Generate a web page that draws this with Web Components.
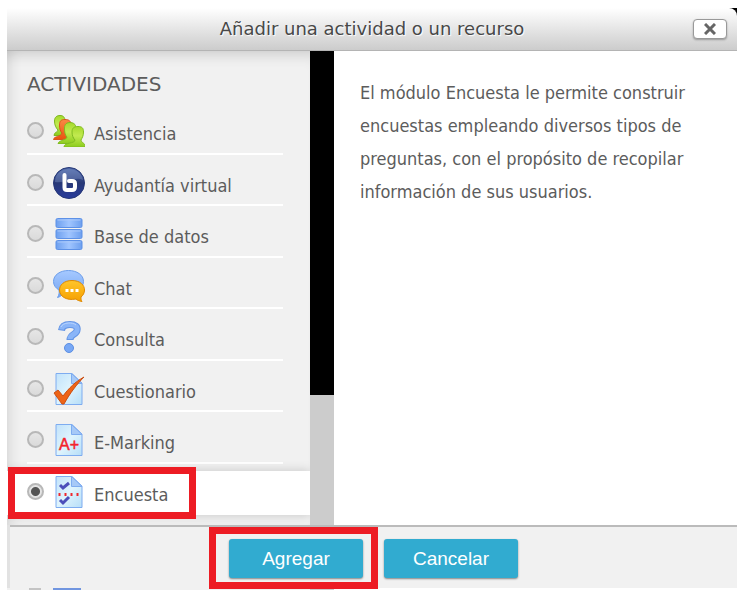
<!DOCTYPE html>
<html lang="es">
<head>
<meta charset="utf-8">
<title>Añadir una actividad o un recurso</title>
<style>
body { margin: 0; background: #fff; color: #5c5c5c; font: 18px/24px "DejaVu Sans Condensed", "DejaVu Sans", sans-serif; }
</style>
</head>
<body>
<activity-chooser></activity-chooser>
<script>
const icons = {
  asistencia: `
    <defs><linearGradient id="g" x2="0" y2="1"><stop stop-color="#a5d92c"/><stop offset=".45" stop-color="#c2ea50"/><stop offset="1" stop-color="#8ccc1d"/></linearGradient>
    <linearGradient id="o" x2="0" y2="1"><stop stop-color="#f98a45"/><stop offset="1" stop-color="#ea5410"/></linearGradient></defs>
    <path fill="url(#g)" stroke="#7cb620" d="M1 20.500C1 17 5 17.500 5 15C3 13 1.500 10 1.500 6C1.500 2 4 .5 7 .5S12 2 12 6C12 10 11 13 9.500 15C10 17 13 17 13 20.500Z"/>
    <path fill="url(#o)" stroke="#d9531e" d="M.5 24.500C1 21 8 22 9 18C7 16 6.500 13 6.500 10C6.500 6 8 4.500 12 4.500S18 6 18 10C18 14 16 16 15 18C16 20 18 21 18 24.500Z"/>
    <path fill="url(#g)" stroke="#80bb22" d="M5 28.500C6 25 14 25 14 22C12 20 11.500 17 11.500 13C11.500 9 14 7.500 17 7.500S23 9 23 13C23 18 22 20 20 22C21 24 23 25 23 28.500Z"/>
    <path fill="url(#g)" stroke="#80bb22" d="M11 32C11 27 22 29 22 25C20 23 19 20 19 17C19 13 21 11.500 25 11.500S30.500 13 30.500 17C30.500 21 29 23 28 25C28 28 32 27 32 32Z"/>`,
  ayudantia: `
    <defs><linearGradient id="b" x2="0" y2="1"><stop stop-color="#526dac"/><stop offset=".5" stop-color="#283977"/><stop offset="1" stop-color="#283b9c"/></linearGradient></defs>
    <circle cx="16" cy="16" r="15.500" fill="url(#b)" stroke="#263776"/>
    <path d="M2 15C2 7 8 2 16 2S29 7 30 13C22 9 12 17 2 15Z" fill="#8da1d0" opacity=".35"/>
    <path d="M11.500 8V20.500Q11.500 23 14 23H19Q22 23 22 20V16.500Q22 14 19 14H16" fill="none" stroke="#fff" stroke-width="4" stroke-linecap="round" stroke-linejoin="round"/>`,
  datos: `
    <defs><linearGradient id="d"><stop stop-color="#6d9fee"/><stop offset=".5" stop-color="#a0c5ff"/><stop offset="1" stop-color="#6d9fee"/></linearGradient></defs>
    <g fill="url(#d)" stroke="#5d91e7"><rect x="3" y=".5" width="26" height="9" rx="1.500"/><rect x="3" y="11.500" width="26" height="9" rx="1.500"/><rect x="3" y="22.500" width="26" height="9" rx="1.500"/></g>
    <path d="M4.500 2H27.500M4.500 13H27.500M4.500 24H27.500" stroke="#a9c8fa"/>`,
  chat: `
    <defs><linearGradient id="c" x2="0" y2="1"><stop stop-color="#a6c9ff"/><stop offset="1" stop-color="#73a4f2"/></linearGradient>
    <linearGradient id="y" x2="0" y2="1"><stop stop-color="#ffc52b"/><stop offset="1" stop-color="#f5a000"/></linearGradient></defs>
    <path d="M15.500 .5C24 .5 30.500 5 30.500 11.500S24 22 15 22L12 22C9 25 7 27 4.500 27.500C6 25 6.500 23 6 20C2.500 18 .5 15 .5 11.500C.5 5 7 .5 15.500 .5Z" fill="url(#c)" stroke="#6d9eea"/>
    <path d="M19 10.500C27 10.500 31.500 15 31.500 20C31.500 23 30 25.500 28 27C28 29 28 30 29 31.500C26 31 24 30 23 29C13 31 6.500 26 6.500 20C6.500 15 11 10.500 19 10.500Z" fill="url(#y)" stroke="#df8900"/>
    <path d="M12.500 20.500H15.500M17.500 20.500H20.500M22.500 20.500H25.500" stroke="#fff" stroke-width="3"/>`,
  consulta: `
    <path d="M8.500 9.500C9 5 12 3.500 17 3.500C22 3.500 25 5.500 24 9.500C23 14 17 13 17 19" fill="none" stroke="#6495e5" stroke-width="7"/>
    <path d="M8.500 8.500C9 5 12 3.500 17 3.500C22 3.500 25 5.500 24 9.500C23 14 17 13 17 18" fill="none" stroke="#8ab5f8" stroke-width="5"/>
    <path d="M8 6C10 1 20 1 23 4" fill="none" stroke="#b9d5ff"/>
    <circle cx="16" cy="27" r="4.500" fill="#78a8f5" stroke="#5c8ee2"/>`,
  cuestionario: `
    <defs><linearGradient id="s" x2="1" y2="1"><stop stop-color="#c1e2fb"/><stop offset=".5" stop-color="#dff4fd"/><stop offset="1" stop-color="#b6def8"/></linearGradient></defs>
    <path d="M3 .5H19L29 10V31.500H3Z" fill="url(#s)" stroke="#7eacf0"/><path d="M18.500 .5V10.500H29Z" fill="#a6c9f7" stroke="#7eacf0"/>
    <path d="M1 20L5 17L10 23C16 15 22 9 31 4C24 11 17 20 11 31H9Z" fill="#ee6417" stroke="#ca4f14"/>`,
  emarking: `
    <defs><linearGradient id="s" x2="1" y2="1"><stop stop-color="#c1e2fb"/><stop offset=".5" stop-color="#dff4fd"/><stop offset="1" stop-color="#b6def8"/></linearGradient></defs>
    <path d="M3 .5H19L29 10V31.500H3Z" fill="url(#s)" stroke="#7eacf0"/><path d="M18.500 .5V10.500H29Z" fill="#a6c9f7" stroke="#7eacf0"/>
    <text x="6" y="26" font-family="Liberation Sans, sans-serif" font-size="16" fill="#f3232c" stroke="#f3232c" stroke-width=".5">A+</text>`,
  encuesta: `
    <defs><linearGradient id="s" x2="1" y2="1"><stop stop-color="#c1e2fb"/><stop offset=".5" stop-color="#dff4fd"/><stop offset="1" stop-color="#b6def8"/></linearGradient></defs>
    <path d="M3 .5H19L29 10V31.500H3Z" fill="url(#s)" stroke="#7eacf0"/><path d="M18.500 .5V10.500H29Z" fill="#a6c9f7" stroke="#7eacf0"/>
    <path d="M6.500 17V20M12.500 17V20M18.500 17V20M24.500 17V20" stroke="#f0272d" stroke-width="2"/>
    <path d="M7 9L10 12L16 7M7 24L10 27L16 21" fill="none" stroke="#4c4fba" stroke-width="3"/>`
};

customElements.define('activity-icon', class extends HTMLElement {
  connectedCallback() {
    this.attachShadow({ mode: 'open' }).innerHTML = `
      <style>:host { display: block; width: 32px; height: 32px; flex: none } svg { display: block }</style>
      <svg width="32" height="32" viewBox="0 0 32 32" aria-hidden="true">${icons[this.getAttribute('name')]}</svg>`;
  }
});

customElements.define('activity-option', class extends HTMLElement {
  connectedCallback() {
    const checked = this.hasAttribute('checked');
    this.attachShadow({ mode: 'open' }).innerHTML = `
      <style>
        :host { display: flex; flex-direction: column; position: relative; padding: 0 27px 0 20px; }
        :host([checked]) { padding-top: 7px; }
        .surface { display: none; position: absolute; inset: -5px 0 -10px; overflow: hidden; }
        .surface::before { content: ""; position: absolute; inset: 12px 0 10px; background: #fff; box-shadow: 0 0 10px rgba(0,0,0,.18); }
        :host([checked]) .surface { display: block; }
        label { display: flex; align-items: flex-start; flex: 1; gap: 9px; padding-top: 12px; border-bottom: 2px solid #fff; }
        :host([checked]) label { position: relative; padding-top: 5px; border: 0; }
        input { appearance: none; flex: none; box-sizing: border-box; width: 17px; height: 17px; margin: 7px 0 0; border: 2px solid #b8b8b8; border-radius: 50%; background: linear-gradient(#e6e6e6, #dadada); }
        input:checked { background: radial-gradient(circle, #555 0 4px, #e4e4e4 5px); }
        span { padding-top: 7px; }
      </style>
      <div class="surface"></div>
      <label><input type="radio" name="actividad"${checked ? ' checked' : ''}><activity-icon name="${this.getAttribute('icon')}"></activity-icon><span><slot></slot></span></label>
      <slot name="mark"></slot>`;
    const input = this.shadowRoot.querySelector('input');
    input.addEventListener('change', () => {
      for (const o of this.parentNode.querySelectorAll('activity-option')) {
        o.toggleAttribute('checked', o === this);
        o.shadowRoot.querySelector('input').checked = o === this;
      }
    });
  }
});

customElements.define('highlight-box', class extends HTMLElement {
  connectedCallback() {
    this.attachShadow({ mode: 'open' }).innerHTML = `
      <style>:host { position: absolute; box-sizing: border-box; border: 7px solid #ed1c24; pointer-events: none; }</style>`;
  }
});

customElements.define('action-button', class extends HTMLElement {
  connectedCallback() {
    this.attachShadow({ mode: 'open' }).innerHTML = `
      <style>
        :host { display: block; position: relative; }
        button { display: block; width: 134px; height: 39px; padding: 0; border: 0; border-radius: 3px; background: #31abd0; color: #fff; font: 19px/39px "Liberation Sans", Arial, sans-serif; box-shadow: 0 1px 2px rgba(0,0,0,.45); }
      </style>
      <button type="button"><slot></slot></button><slot name="mark"></slot>`;
  }
});

customElements.define('dialog-header', class extends HTMLElement {
  connectedCallback() {
    this.attachShadow({ mode: 'open' }).innerHTML = `
      <style>
        :host { display: block; background: linear-gradient(#000, #000) top right / 8px 8px no-repeat, #fff; }
        header { display: grid; grid-template-columns: 48px 1fr 48px; align-items: center; height: 42px; border-bottom: 1px solid #b4b4b4; border-radius: 0 8px 0 0; background: linear-gradient(#fff, #ccc); }
        h1 { grid-column: 2; margin: 0; text-align: center; color: #484848; font: 18px/24px "DejaVu Sans", sans-serif; text-shadow: 1px 1px 1px #fff; }
        button { box-sizing: border-box; width: 34px; height: 20px; padding: 0; margin-left: 4px; border: 1px solid #999; border-radius: 4px; background: #fff; box-shadow: 0 1px 2px rgba(0,0,0,.3); }
        svg { display: block; margin: auto; }
      </style>
      <header><h1><slot></slot></h1>
      <button type="button" aria-label="Cerrar"><svg width="12" height="12" viewBox="0 0 12 12"><path d="M1 1L11 11M11 1L1 11" stroke="#666" stroke-width="3"/></svg></button></header>`;
  }
});

customElements.define('activity-chooser', class extends HTMLElement {
  connectedCallback() {
    this.attachShadow({ mode: 'open' }).innerHTML = `
      <style>
        :host { display: flex; flex-direction: column; box-sizing: border-box; min-height: 100vh; padding: 8px 14px 10px 7px; }
        main { display: grid; grid-template-columns: 303px 24px 1fr; flex: 1; }
        aside { padding-top: 21px; background: #f1f1f1; box-shadow: inset 0 14px 14px -10px rgba(0,0,0,.14), inset 10px 0 14px -8px rgba(0,0,0,.12); }
        h2 { margin: 0 20px 7px; font: 20px/24px "DejaVu Sans", sans-serif; }
        .list { display: grid; grid-auto-rows: 1fr; min-height: 412px; }
        .track { background: linear-gradient(#000 344px, #ccc 344px); }
        article { padding: 25px 50px 20px 26px; }
        p { margin: 0; max-width: 336px; line-height: 33px; }
        footer { display: flex; justify-content: center; gap: 21px; position: relative; margin-left: 3px; padding: 12px 0 10px; border-top: 2px solid #bbb; background: #f1f1f1; }
        .next { display: grid; grid-template-columns: 22px 12px 12px 28px 229px 24px; height: 2px; background: linear-gradient(#f1f1f1, #f1f1f1) 0 0 / 303px no-repeat; }
        .next i:nth-child(2) { background: #c4c4c4; }
        .next i:nth-child(4) { background: #7196e0; }
        .next i:nth-child(6) { background: #ccc; }
        .dialog { display: flex; flex-direction: column; flex: 1; background: linear-gradient(#e2e2e2, #e2e2e2) 0 0 / 3px no-repeat; }
        article { background: #fff; }
        .option-mark { inset: 3px 114px -4px 1px; }
        .button-mark { inset: -12px -15px -11px -20px; }
      </style>
      <dialog-header>Añadir una actividad o un recurso</dialog-header>
      <div class="dialog">
      <main>
        <aside>
          <h2>ACTIVIDADES</h2>
          <div class="list" role="radiogroup" aria-label="Actividades">
            <activity-option icon="asistencia">Asistencia</activity-option>
            <activity-option icon="ayudantia">Ayudantía virtual</activity-option>
            <activity-option icon="datos">Base de datos</activity-option>
            <activity-option icon="chat">Chat</activity-option>
            <activity-option icon="consulta">Consulta</activity-option>
            <activity-option icon="cuestionario">Cuestionario</activity-option>
            <activity-option icon="emarking">E-Marking</activity-option>
            <activity-option icon="encuesta" checked>Encuesta<highlight-box slot="mark" class="option-mark"></highlight-box></activity-option>
          </div>
        </aside>
        <div class="track"></div>
        <article><p>El módulo Encuesta le permite construir encuestas empleando diversos tipos de preguntas, con el propósito de recopilar información de sus usuarios.</p></article>
      </main>
      <footer>
        <action-button>Agregar<highlight-box slot="mark" class="button-mark"></highlight-box></action-button>
        <action-button>Cancelar</action-button>
      </footer>
      <div class="next"><i></i><i></i><i></i><i></i><i></i><i></i></div>
      </div>`;
  }
});
</script>
</body>
</html>
